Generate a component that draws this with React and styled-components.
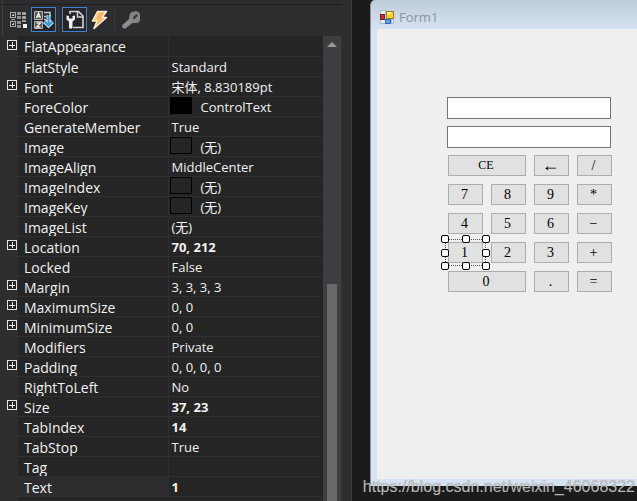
import { Fragment, useState } from "react";
import styled, { createGlobalStyle, css } from "styled-components";

const GlobalStyle = createGlobalStyle`
  * {
    box-sizing: border-box;
  }

  body {
    margin: 0;
    background: #1b1b1c;
    overflow: hidden;
    font-family: "Open Sans", "Noto Sans CJK SC", sans-serif;
  }

  button, input {
    font: inherit;
    margin: 0;
    padding: 0;
  }
`;

const Workspace = styled.main`
  position: relative;
  display: flex;
  height: 100vh;
  overflow: hidden;
`;

/* ---------- Properties panel ---------- */

const Panel = styled.section`
  display: flex;
  flex-direction: column;
  flex: 0 0 352px;
  padding: 0 9px 0 2px;
  background: linear-gradient(to right, #2d2d30 2px, #3f3f46 2px, #3f3f46 3px, #2d2d30 3px);
  border-right: 1px solid #3f3f46;
`;

const Toolbar = styled.div`
  display: flex;
  align-items: center;
  flex: 0 0 32px;
  margin-top: 4px;
  padding: 0 4px 2px;
  border-top: 1px solid #1f1f22;
`;

const ToolButton = styled.button`
  display: grid;
  place-items: center;
  width: 25px;
  height: 25px;
  border: 1px solid ${({ $active }) => ($active ? "#3a84cf" : "transparent")};
  background: ${({ $active }) => ($active ? "#252529" : "transparent")};

  svg {
    display: block;
  }
`;

const Separator = styled.span`
  width: 1px;
  height: 22px;
  margin: 0 3px 0 2px;
  background: #38383c;
`;

const PanelBody = styled.div`
  display: flex;
  flex: 1;
  min-height: 0;
  overflow: hidden;
  border-right: 1px solid #333337;
`;

const Properties = styled.div`
  flex: 1;
  background: linear-gradient(to right, #2d2d30 16px, #252526 16px);
`;

const PropertyTable = styled.table`
  width: 100%;
  table-layout: fixed;
  border-collapse: collapse;
  color: #f1f1f1;
`;

const cell = css`
  height: 20px;
  padding: 0;
  border-bottom: 1px solid #2f2f33;
  text-align: left;
  vertical-align: top;
  white-space: nowrap;
`;

const Gutter = styled.td`
  width: 16px;
  height: 20px;
  padding: 4px 0 0 5px;
  vertical-align: top;
`;

const Name = styled.th`
  ${cell}
  width: 150px;
  border-right: 1px solid #2f2f33;
  background: ${({ $selected }) => ($selected ? "#2d2d30" : "transparent")};
  font-size: 14px;
  font-weight: 400;
`;

const Value = styled.td`
  ${cell}
  font-size: 13px;
  font-weight: ${({ $bold }) => ($bold ? 700 : 400)};
`;

const Line = styled.div`
  display: flex;
  align-items: flex-start;
  gap: 9px;
  height: 19px;
  padding-left: ${({ $indent }) => $indent}px;
  line-height: 21px;
  overflow: hidden;
`;

const Swatch = styled.span`
  flex: 0 0 22px;
  height: 17px;
  border: 1px solid #000;
  background: ${({ $fill }) => $fill};
`;

const Expander = styled.button`
  display: block;
  width: 10px;
  height: 10px;
  border: 1px solid #e6e6e6;
  background:
    linear-gradient(#f1f1f1, #f1f1f1) center / 6px 1px no-repeat,
    linear-gradient(#f1f1f1, #f1f1f1) center / 1px 6px no-repeat,
    #252526;
`;

const ScrollTrack = styled.div`
  display: flex;
  flex-direction: column;
  align-items: center;
  flex: 0 0 18px;
  padding-top: 6px;
  background: #3e3e42;
`;

const ScrollArrow = styled.button`
  width: 10px;
  height: 5px;
  border: 0;
  background: #999;
  clip-path: polygon(50% 0, 100% 100%, 0 100%);
`;

const ScrollThumb = styled.div`
  width: 10px;
  flex: 1;
  margin-top: 237px;
  background: #686868;
`;

/* ---------- Designer ---------- */

const Designer = styled.section`
  display: flex;
  flex: 1;
  min-width: 0;
  padding: 0 0 15px 18px;
  background: #1b1b1c;
`;

const FormWindow = styled.div`
  display: flex;
  flex-direction: column;
  flex: 1;
  min-width: 0;
  padding: 0 0 7px 6px;
  border-left: 1px solid #8d9299;
  border-top-left-radius: 5px;
  background: linear-gradient(#bfcddb, #d6e3f2 30px);
`;

const TitleBar = styled.header`
  display: flex;
  align-items: center;
  gap: 5px;
  flex: 0 0 29px;
  padding: 4px 0 0 3px;
  color: #8b949d;
  font-size: 13px;
`;

const Client = styled.div`
  flex: 1;
  padding: 68px 0 0 70px;
  background: #efefef;
`;

const Calculator = styled.div`
  display: flex;
  flex-direction: column;
  gap: 7px;
  width: 165px;
`;

const Display = styled.input`
  width: 164px;
  height: 22px;
  border: 1px solid #747474;
  background: #fff;
  outline: 0;
`;

const Keypad = styled.div`
  display: grid;
  grid-template-columns: repeat(4, 35px);
  gap: 8px;
  padding-left: 1px;
`;

const Key = styled.button`
  display: block;
  width: 100%;
  height: 21px;
  padding-right: 2px;
  border: 1px solid #adadad;
  background: #e1e1e1;
  color: #000;
  font-family: "Liberation Serif", "Noto Sans CJK SC", serif;
  font-size: ${({ $size }) => $size}px;
  line-height: 19px;
`;

const KeySlot = styled.div`
  position: relative;
  grid-column: span ${({ $span }) => $span};
`;

const Selection = styled.div`
  position: absolute;
  inset: -7px;
  display: grid;
  grid-template-columns: repeat(3, 8px);
  justify-content: space-between;
  align-content: space-between;
  pointer-events: none;

  &::before {
    content: "";
    position: absolute;
    inset: 4px;
    border: 1px dotted #555;
  }
`;

const Handle = styled.span`
  position: relative;
  width: 8px;
  height: 8px;
  border: 1px solid #000;
  border-radius: 2px;
  background: #fff;
  visibility: ${({ $hidden }) => ($hidden ? "hidden" : "visible")};
`;

const Watermark = styled.div`
  position: absolute;
  right: 2px;
  bottom: 4px;
  color: rgba(205, 205, 205, 0.85);
  font-family: "Liberation Sans", sans-serif;
  font-size: 16px;
  line-height: 20px;
  text-shadow: 0 0 1px rgba(90, 90, 90, 0.6);
  pointer-events: none;
`;

const properties = [
  { name: "FlatAppearance", value: "", expandable: true },
  { name: "FlatStyle", value: "Standard" },
  { name: "Font", value: "宋体, 8.830189pt", expandable: true },
  { name: "ForeColor", value: "ControlText", swatch: "#000" },
  { name: "GenerateMember", value: "True" },
  { name: "Image", value: "(无)", swatch: "#252526" },
  { name: "ImageAlign", value: "MiddleCenter" },
  { name: "ImageIndex", value: "(无)", swatch: "#252526" },
  { name: "ImageKey", value: "(无)", swatch: "#252526" },
  { name: "ImageList", value: "(无)" },
  { name: "Location", value: "70, 212", expandable: true, bold: true },
  { name: "Locked", value: "False" },
  { name: "Margin", value: "3, 3, 3, 3", expandable: true },
  { name: "MaximumSize", value: "0, 0", expandable: true },
  { name: "MinimumSize", value: "0, 0", expandable: true },
  { name: "Modifiers", value: "Private" },
  { name: "Padding", value: "0, 0, 0, 0", expandable: true },
  { name: "RightToLeft", value: "No" },
  { name: "Size", value: "37, 23", expandable: true, bold: true },
  { name: "TabIndex", value: "14", bold: true },
  { name: "TabStop", value: "True" },
  { name: "Tag", value: "" },
  { name: "Text", value: "1", bold: true },
];

const keys = [
  { label: "CE", span: 2, size: 12 },
  { label: "←", size: 18 },
  { label: "/" },
  { label: "7" },
  { label: "8" },
  { label: "9" },
  { label: "*" },
  { label: "4" },
  { label: "5" },
  { label: "6" },
  { label: "−" },
  { label: "1" },
  { label: "2" },
  { label: "3" },
  { label: "+" },
  { label: "0", span: 2 },
  { label: "." },
  { label: "=" },
];

const CategorizedIcon = () => (
  <svg width="19" height="18" viewBox="0 0 19 18" fill="none" shapeRendering="crispEdges">
    <path d="M1.500 1.500h5v5h-5zM1.500 10.500h5v5h-5z" stroke="#a9a9a9" />
    <path d="M3 4h2M4 3v2M3 13h2M4 12v2" stroke="#d0d0d0" />
    <path d="M8 1h4v3H8zM8 5h4v3H8zM8 10h4v3H8zM8 14h4v3H8z" fill="#8f8f8f" />
    <path d="M13 1h4v3h-4zM13 5h4v3h-4zM13 9h4v2h-4zM2 8h4v1H2z" fill="#9d9d9d" />
    <path d="M14 13h4v4h-4z" fill="#f1f1f1" />
  </svg>
);

const SortIcon = () => (
  <svg width="21" height="20" viewBox="0 0 21 20" fill="none">
    <path d="M1.500 1.500h8v8h-8zM1.500 11.500h8v7h-8z" fill="#555" stroke="#b4b4b4" />
    <path d="M3.500 8l2-5 2 5M4 6.500h3M3.500 13h4l-4 4h4" stroke="#eee" strokeWidth="1.300" />
    <path d="M11 2.500h6v4M11 6.500h2M11 9.500h2" stroke="#c9c9c9" strokeWidth="1.500" />
    <path d="M15.500 5v10M11.500 11.500l4 4 4-4" stroke="#d9efff" strokeWidth="4" />
    <path d="M15.500 5v10M11.500 11.500l4 4 4-4" stroke="#3795d4" strokeWidth="2" />
  </svg>
);

const PageIcon = () => (
  <svg width="20" height="19" viewBox="0 0 20 19" fill="none">
    <path d="M5 4V1.500h8.500L18 6v11.500H8" stroke="#d2d2d2" strokeWidth="1.600" />
    <path d="M12.500 2v5H18" stroke="#d2d2d2" strokeWidth="1.500" />
    <path
      d="M1.500 5.500v4l2.500 2v6c0 1.600 3.500 1.600 3.500 0v-6l2.500-2v-4L7.500 6v2.500H4V6z"
      fill="#f1f1f1"
    />
  </svg>
);

const BoltIcon = () => (
  <svg width="17" height="20" viewBox="0 0 17 20">
    <path
      d="M6.500 1.500h9L11 7.500h4.500L3 18.500l3-7.500H1.500z"
      fill="#f3b45d"
      stroke="#fff0d8"
      strokeWidth="1.500"
      strokeLinejoin="round"
    />
    <path d="M8 3L4 10h4.500" fill="none" stroke="#ffd18b" strokeWidth="1.500" />
  </svg>
);

const WrenchIcon = () => (
  <svg width="20" height="20" viewBox="0 0 20 20">
    <path
      d="M9 3.500C10.500 1.500 14.500 1 16 1.500c2 .3 3 2 3 3.500v5c0 1.500-2 3-3.500 3h-4L5 18.300c-2.500 1.500-5-1-3.500-3.500L8 9z"
      fill="#858585"
    />
    <path d="M12 7l3.500-3 1.500 1.500-3 3.500h-2z" fill="#3c3c3f" />
    <path d="M3.500 16l7-6" stroke="#a3a3a3" />
  </svg>
);

const FormIcon = () => (
  <svg width="14" height="14" viewBox="0 0 14 14">
    <path d="M.5.500h5v4h-5zM.5 9.500h5v4h-5zM11.500 9.500h2v4h-2z" fill="#e8edf2" stroke="#aeb9c5" />
    <rect x=".5" y="4.500" width="4" height="5" fill="#c8302b" stroke="#73201e" />
    <rect x="6.500" y="1.500" width="7" height="7" fill="#ffcf33" stroke="#a97817" />
    <path d="M7 2h4v2H7z" fill="#fff1a0" />
    <rect x="5.500" y="9.500" width="5" height="4" fill="#5d9bf5" stroke="#3769bd" />
  </svg>
);

const tools = [
  { label: "Categorized", icon: <CategorizedIcon /> },
  { label: "Alphabetical", icon: <SortIcon />, active: true },
  { label: "Properties", icon: <PageIcon />, active: true, separated: true },
  { label: "Events", icon: <BoltIcon /> },
  { label: "Property Pages", icon: <WrenchIcon />, separated: true },
];

const PropertyRow = ({ property, selected, onSelect }) => {
  const { name, value, expandable, bold, swatch } = property;

  return (
    <tr onClick={() => onSelect(name)}>
      <Gutter>{expandable && <Expander aria-label={`Expand ${name}`} />}</Gutter>
      <Name scope="row" $selected={selected}>
        <Line $indent={6}>{name}</Line>
      </Name>
      <Value $bold={bold}>
        <Line $indent={swatch ? 1 : 3}>
          {swatch && <Swatch $fill={swatch} />}
          <span>{value}</span>
        </Line>
      </Value>
    </tr>
  );
};

const PropertiesPanel = () => {
  const [selected, setSelected] = useState("Text");

  return (
    <Panel>
      <Toolbar>
        {tools.map(({ label, icon, active, separated }) => (
          <Fragment key={label}>
            {separated && <Separator />}
            <ToolButton aria-label={label} $active={active}>
              {icon}
            </ToolButton>
          </Fragment>
        ))}
      </Toolbar>
      <PanelBody>
        <Properties>
          <PropertyTable>
            <tbody>
              {properties.map((property) => (
                <PropertyRow
                  key={property.name}
                  property={property}
                  selected={selected === property.name}
                  onSelect={setSelected}
                />
              ))}
            </tbody>
          </PropertyTable>
        </Properties>
        <ScrollTrack>
          <ScrollArrow aria-label="Scroll up" />
          <ScrollThumb />
        </ScrollTrack>
      </PanelBody>
    </Panel>
  );
};

const SelectionFrame = () => (
  <Selection>
    {Array.from({ length: 9 }, (_, i) => (
      <Handle key={i} $hidden={i === 4} />
    ))}
  </Selection>
);

const FormDesigner = () => {
  const [selectedKey, setSelectedKey] = useState("1");

  return (
    <Designer>
      <FormWindow>
        <TitleBar>
          <FormIcon />
          <span>Form1</span>
        </TitleBar>
        <Client>
          <Calculator>
            <Display aria-label="Expression" />
            <Display aria-label="Result" />
            <Keypad>
              {keys.map(({ label, span = 1, size = 14 }) => (
                <KeySlot key={label} $span={span}>
                  <Key $size={size} onClick={() => setSelectedKey(label)}>
                    {label}
                  </Key>
                  {selectedKey === label && <SelectionFrame />}
                </KeySlot>
              ))}
            </Keypad>
          </Calculator>
        </Client>
      </FormWindow>
    </Designer>
  );
};

const App = () => (
  <>
    <GlobalStyle />
    <Workspace>
      <PropertiesPanel />
      <FormDesigner />
      <Watermark>https://blog.csdn.net/weixin_46068322</Watermark>
    </Workspace>
  </>
);

export default App;
